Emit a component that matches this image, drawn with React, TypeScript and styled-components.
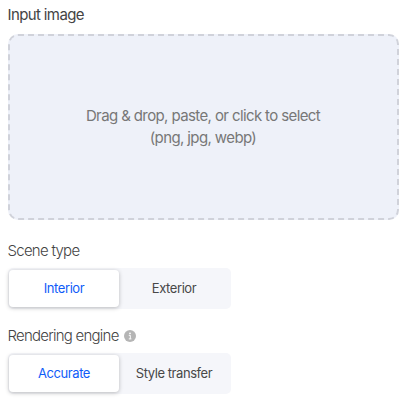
import React from "react";
import styled, { createGlobalStyle } from "styled-components";

const GlobalStyle = createGlobalStyle`
  * { box-sizing: border-box; }
  body {
    margin: 0;
    background: #fff;
    color: #444;
    font-family: Inter, "Liberation Sans", sans-serif;
  }
`;

const Form = styled.main`
  width: 404px;
  height: 400px;
  padding: 5px 5px 0 7.5px;
  overflow: hidden;
`;

const Label = styled.div<{ $tracking: number; $weight?: number }>`
  display: flex;
  align-items: center;
  gap: 5.5px;
  height: 20px;
  font-size: 15px;
  font-weight: ${(p) => p.$weight ?? 300};
  line-height: 20px;
  letter-spacing: ${(p) => p.$tracking}px;
  white-space: nowrap;
`;

const DropZone = styled.div`
  display: flex;
  align-items: center;
  justify-content: center;
  width: 391px;
  height: 186px;
  margin: 8.5px 0 21px;
  border: 2px dashed #d0d2da;
  border-radius: 10px;
  background: #eef1f9;
  color: #777;
  font-size: 15px;
  font-weight: 400;
  line-height: 22px;
  letter-spacing: -0.61px;
  text-align: center;
`;

const Segmented = styled.div<{ $after?: number }>`
  display: grid;
  grid-template-columns: 110px 110px;
  width: 223px;
  height: 41px;
  margin: 7.5px 0 ${(p) => p.$after ?? 0}px;
  padding: 2px 1.5px;
  border-radius: 5px;
  background: #f5f6fa;
`;

const Segment = styled.button<{ $active?: boolean }>`
  height: 37px;
  padding: 0;
  border: 0;
  border-radius: 4px;
  background: ${(p) => (p.$active ? "#fff" : "transparent")};
  box-shadow: ${(p) => (p.$active ? "0 1px 4px rgba(0, 0, 0, 0.25)" : "none")};
  color: ${(p) => (p.$active ? "#0f5cf8" : "#484848")};
  font: 400 13px/37px Inter, "Liberation Sans", sans-serif;
  letter-spacing: -0.43px;
`;

const InfoIcon = () => (
  <svg width="12" height="12" viewBox="0 0 12 12" aria-label="Info">
    <circle cx="6" cy="6" r="6" fill="#b5b5b5" />
    <circle cx="6" cy="3.3" r="0.9" fill="#fff" />
    <path d="M4.8 5.3H6.3V8.8M4.8 8.9H7.4" fill="none" stroke="#fff" strokeWidth="1" />
  </svg>
);

export default function App() {
  return (
    <Form>
      <GlobalStyle />
      <Label $tracking={-0.62} $weight={400}>Input image</Label>
      <DropZone>
        <div>
          Drag &amp; drop, paste, or click to select
          <br />
          (png, jpg, webp)
        </div>
      </DropZone>
      <Label $tracking={-0.73}>Scene type</Label>
      <Segmented $after={16.5}>
        <Segment $active>Interior</Segment>
        <Segment>Exterior</Segment>
      </Segmented>
      <Label $tracking={-0.76}>
        Rendering engine
        <InfoIcon />
      </Label>
      <Segmented>
        <Segment $active>Accurate</Segment>
        <Segment>Style transfer</Segment>
      </Segmented>
    </Form>
  );
}
